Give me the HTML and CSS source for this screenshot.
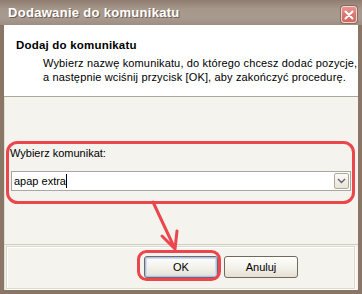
FILE: index.html
```html
<!DOCTYPE html>
<html lang="pl">
<head>
    <meta charset="UTF-8">
    <title>Dodawanie do komunikatu</title>
    <link rel="stylesheet" href="styles.css">
</head>
<body>
    <div class="window">
        <div class="titlebar">
            <span class="title">Dodawanie do komunikatu</span>
            <span class="close">
                <svg width="10" height="10" viewBox="0 0 10 10"><path d="M1.5 1.5 L8.5 8.5 M8.5 1.5 L1.5 8.5" stroke="#fff" stroke-width="2" stroke-linecap="round"/></svg>
            </span>
        </div>
        <div class="client">
            <div class="intro">
                <h1>Dodaj do komunikatu</h1>
                <p>Wybierz nazwę komunikatu, do którego chcesz dodać pozycje,<br>a następnie wciśnij przycisk [OK], aby zakończyć procedurę.</p>
            </div>
            <div class="content">
                <label for="combo">Wybierz komunikat:</label>
                <div class="combo" id="combo">
                    <span class="value">apap extra</span><span class="caret"></span>
                    <span class="drop">
                        <svg width="9" height="6" viewBox="0 0 9 6"><path d="M1 1 L4.5 4.5 L8 1" fill="none" stroke="#5f6070" stroke-width="1.4"/></svg>
                    </span>
                </div>
            </div>
            <div class="footer">
                <div class="groove">
                    <button class="btn default">OK</button>
                    <button class="btn">Anuluj</button>
                </div>
            </div>
        </div>
        <!-- red annotations drawn over the dialog -->
        <svg class="marks" width="362" height="294" viewBox="0 0 362 294">
            <rect x="7.5" y="142.5" width="346" height="60" rx="10" />
            <rect x="138.5" y="251.5" width="81" height="28" rx="8" />
            <path d="M153 202 L175 249 M162 236 L175 249 L177 231" />
        </svg>
    </div>
</body>
</html>
```

FILE: styles.css
```css
body {
    margin: 0;
    font-family: "Liberation Sans", Arial, sans-serif;
    font-size: 11px;
    color: #000;
}
.window {
    position: relative;
    width: 362px;
    height: 294px;
    background: #8a7667;
    display: flex;
    flex-direction: column;
}
.titlebar {
    height: 25px;
    flex-shrink: 0;
    display: flex;
    align-items: flex-start;
    justify-content: space-between;
    padding: 0 5px 0 8px;
    background: linear-gradient(#8f7c6f, #a6978b 35%, #a89a8f 70%, #9e8f83);
}
.title {
    margin-top: 5px;
    color: #fff;
    font-weight: bold;
    font-size: 13px;
    letter-spacing: 0.3px;
    line-height: 16px;
    text-shadow: 1px 1px 0 #6f5f53;
}
.close {
    margin-top: 6px;
    width: 14px;
    height: 15px;
    display: flex;
    align-items: center;
    justify-content: center;
    border: 1px solid #f2d6d0;
    border-radius: 3px;
    background: linear-gradient(#e79690, #d6746c 60%, #cf6a62);
    box-shadow: 0 0 0 1px #8d6b63;
}
.client {
    flex: 1;
    margin: 0 4px 4px;
    display: flex;
    flex-direction: column;
    background: #f4f3ee;
    box-shadow: inset 1px 0 0 #e3ded4;
}
.intro {
    height: 72px;
    padding: 13px 0 0 12px;
    box-sizing: border-box;
    background: #fff;
    border-bottom: 1px solid #aca899;
}
.intro h1 {
    margin: 0;
    font-size: 11.5px;
    letter-spacing: 0.2px;
    line-height: 14px;
    font-weight: bold;
}
.intro p {
    margin: 4px 0 0 27px;
    line-height: 14px;
    letter-spacing: 0.15px;
}
.content {
    flex: 1;
    padding: 49px 7px 0 6px;
}
.content label {
    display: block;
    line-height: 14px;
    margin-bottom: 11px;
}
.combo {
    height: 18px;
    margin-left: 1px;
    border: 1px solid #a7a6a2;
    background: #fff;
    display: flex;
    align-items: center;
    padding-left: 2px;
}
.value {
    line-height: 14px;
}
.caret {
    width: 1px;
    height: 14px;
    background: #000;
}
.drop {
    margin-left: auto;
    margin-right: 1px;
    width: 13px;
    height: 14px;
    display: flex;
    align-items: center;
    justify-content: center;
    border: 1px solid #b2a995;
    border-radius: 2px;
    background: linear-gradient(#fbfaf6, #e8e4d8);
}
.footer {
    height: 46px;
    border-top: 1px solid #d0ccbf;
    padding: 1px 3px 1px 2px;
    box-sizing: border-box;
}
.groove {
    height: 100%;
    box-sizing: border-box;
    border: 1px solid #dcd8cc;
    box-shadow: inset 1px 1px 0 #fff, 1px 1px 0 #fff;
    display: flex;
    gap: 6px;
    padding: 9px 0 0 137px;
}
.btn {
    width: 74px;
    height: 22px;
    padding: 0;
    font-family: "Liberation Sans", Arial, sans-serif;
    font-size: 11px;
    color: #000;
    border: 1px solid #75685d;
    border-radius: 3px;
    background: linear-gradient(#fefefd, #f4f2ec 50%, #e5e0d3);
}
.btn.default {
    box-shadow: inset 0 0 0 1px #a9c3ec, inset 0 0 0 2px #cddcf5;
}
.marks {
    position: absolute;
    left: 0;
    top: 0;
    pointer-events: none;
    fill: none;
    stroke: #ea464b;
    stroke-width: 3;
    stroke-linecap: round;
    stroke-linejoin: round;
}
```
